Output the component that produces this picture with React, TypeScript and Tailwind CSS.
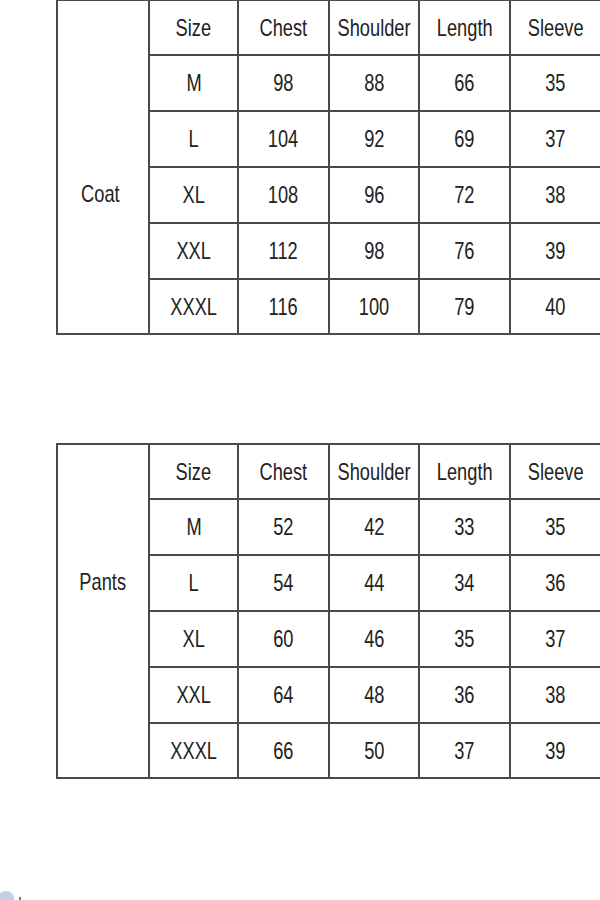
const HEAD = ['Size', 'Chest', 'Shoulder', 'Length', 'Sleeve'];

const COAT = [
  ['M', '98', '88', '66', '35'],
  ['L', '104', '92', '69', '37'],
  ['XL', '108', '96', '72', '38'],
  ['XXL', '112', '98', '76', '39'],
  ['XXXL', '116', '100', '79', '40'],
];

const PANTS = [
  ['M', '52', '42', '33', '35'],
  ['L', '54', '44', '34', '36'],
  ['XL', '60', '46', '35', '37'],
  ['XXL', '64', '48', '36', '38'],
  ['XXXL', '66', '50', '37', '39'],
];

// narrow text: Liberation Sans squeezed horizontally
const T = ({ children }: { children: string }) => (
  <span className="inline-block scale-x-[0.76] leading-none whitespace-nowrap">{children}</span>
);

const SizeTable = ({ label, rows, labelPad }: { label: string; rows: string[][]; labelPad: string }) => {
  const all = [HEAD, ...rows];
  return (
    <div className="ml-[56px] w-[547px] grid grid-cols-[90px_87px_89px_88px_89px_89px] grid-rows-[53px_54px_54px_54px_54px_53px] gap-[2px] bg-[#4a4a4a] p-[2px]">
      <div className={`row-span-6 bg-white flex justify-center ${labelPad}`}>
        <T>{label}</T>
      </div>
      {all.map((r, i) =>
        r.map((c, j) => (
          <div key={`${i}-${j}`} className="bg-white flex items-center justify-center">
            <T>{c}</T>
          </div>
        ))
      )}
    </div>
  );
};

export default function App() {
  return (
    <div
      className="relative w-[600px] h-[900px] overflow-hidden bg-white text-[24px] text-[#222]"
      style={{ fontFamily: '"Liberation Sans", Arial, sans-serif' }}
    >
      <div className="-mt-[1px]">
        <SizeTable label="Coat" rows={COAT} labelPad="pt-[181px] pr-[5px]" />
      </div>
      <div className="mt-[108px]">
        <SizeTable label="Pants" rows={PANTS} labelPad="pt-[125px]" />
      </div>
      <svg className="absolute left-0 bottom-0" width="24" height="16" viewBox="0 0 24 16">
        <ellipse cx="6" cy="14" rx="8" ry="7" fill="#c3d0ea" />
        <rect x="19" y="13" width="2" height="3" fill="#777" />
      </svg>
    </div>
  );
}
